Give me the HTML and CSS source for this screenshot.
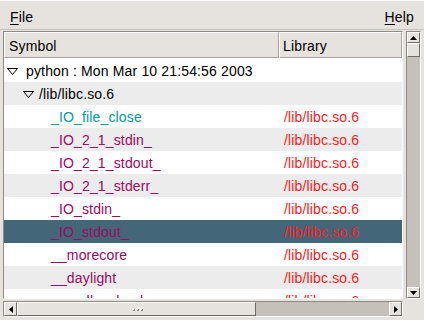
FILE: index.html
```html
<!DOCTYPE html>
<html lang="en">
    <head>
        <meta charset="utf-8">
        <title>Symbols</title>
        <link rel="stylesheet" href="styles.css">
    </head>
    <body>
        <div class="menubar">
            <span class="menuItem"><u>F</u>ile</span>
            <span class="menuItem"><u>H</u>elp</span>
        </div>
        <div class="mainContainer">
            <div class="treeFrame">
                <div class="headerRow">
                    <div class="headerCell symbolCol">Symbol</div>
                    <div class="headerCell libCol">Library</div>
                </div>
                <div class="row">
                    <div class="cell symbolCol depth0"><svg class="expander" width="11" height="7" viewBox="0 0 11 7"><polygon points="0.5,0.5 10.5,0.5 5.5,6.5" fill="none" stroke="#000" stroke-width="1"/></svg>python : Mon Mar 10 21:54:56 2003</div>
                    <div class="cell libCol"></div>
                </div>
                <div class="row alt">
                    <div class="cell symbolCol depth1"><svg class="expander" width="11" height="7" viewBox="0 0 11 7"><polygon points="0.5,0.5 10.5,0.5 5.5,6.5" fill="none" stroke="#000" stroke-width="1"/></svg>/lib/libc.so.6</div>
                    <div class="cell libCol"></div>
                </div>
                <div class="row">
                    <div class="cell symbolCol depth2 funcName">_IO_file_close</div>
                    <div class="cell libCol libName">/lib/libc.so.6</div>
                </div>
                <div class="row alt">
                    <div class="cell symbolCol depth2 dataName">_IO_2_1_stdin_</div>
                    <div class="cell libCol libName">/lib/libc.so.6</div>
                </div>
                <div class="row">
                    <div class="cell symbolCol depth2 dataName">_IO_2_1_stdout_</div>
                    <div class="cell libCol libName">/lib/libc.so.6</div>
                </div>
                <div class="row alt">
                    <div class="cell symbolCol depth2 dataName">_IO_2_1_stderr_</div>
                    <div class="cell libCol libName">/lib/libc.so.6</div>
                </div>
                <div class="row">
                    <div class="cell symbolCol depth2 dataName">_IO_stdin_</div>
                    <div class="cell libCol libName">/lib/libc.so.6</div>
                </div>
                <div class="row selected">
                    <div class="cell symbolCol depth2 dataName">_IO_stdout_</div>
                    <div class="cell libCol libName">/lib/libc.so.6</div>
                </div>
                <div class="row">
                    <div class="cell symbolCol depth2 dataName">__morecore</div>
                    <div class="cell libCol libName">/lib/libc.so.6</div>
                </div>
                <div class="row alt">
                    <div class="cell symbolCol depth2 dataName">__daylight</div>
                    <div class="cell libCol libName">/lib/libc.so.6</div>
                </div>
                <div class="row">
                    <div class="cell symbolCol depth2 dataName">__malloc_hook</div>
                    <div class="cell libCol libName">/lib/libc.so.6</div>
                </div>
            </div>
            <div class="vScroll">
                <div class="scrollButton vButton"><svg width="7" height="4" viewBox="0 0 7 4"><polygon points="3.5,0 7,4 0,4" fill="#000"/></svg></div>
                <div class="vThumb"></div>
                <div class="vTrough"></div>
                <div class="scrollButton vButton"><svg width="7" height="4" viewBox="0 0 7 4"><polygon points="0,0 7,0 3.5,4" fill="#000"/></svg></div>
            </div>
        </div>
        <div class="hScroll">
            <div class="scrollButton hButton"><svg width="4" height="7" viewBox="0 0 4 7"><polygon points="0,3.5 4,0 4,7" fill="#000"/></svg></div>
            <div class="hThumb"><span class="grip"></span><span class="grip"></span><span class="grip"></span></div>
            <div class="hTrough"></div>
            <div class="scrollButton hButton"><svg width="4" height="7" viewBox="0 0 4 7"><polygon points="0,0 4,3.5 0,7" fill="#000"/></svg></div>
        </div>
    </body>
</html>
```

FILE: styles.css
```css
* {
    margin: 0;
    padding: 0;
    box-sizing: border-box;
}
html, body {
    width: 424px;
    height: 320px;
    overflow: hidden;
    background-color: #e6e3de;
    font-family: "Liberation Sans", Arial, sans-serif;
    font-size: 14px;
    letter-spacing: 0.15px;
    color: #000;
}
.menubar {
    height: 30px;
    display: flex;
    justify-content: space-between;
    align-items: center;
    padding: 3px 10px 0 10px;
    border-top: 1px solid #fff;
    border-bottom: 1px solid #c8c4bd;
}
.menuItem u {
    text-decoration: underline;
    text-underline-offset: 2px;
}
.mainContainer {
    display: flex;
    margin-top: 1px;
    padding-left: 3px;
    height: 268px;
}
.treeFrame {
    width: 400px;
    height: 268px;
    border-style: solid;
    border-width: 1px;
    border-color: #8d8983 #fff #fff #8d8983;
    background-color: #fff;
    overflow: hidden;
}
.headerRow {
    display: flex;
    height: 27px;
    background-color: #e6e3de;
    border-bottom: 1px solid #fff;
}
.headerCell {
    height: 26px;
    line-height: 26px;
    padding-left: 4px;
    border-top: 1px solid #fff;
    border-left: 1px solid #fff;
    border-right: 1px solid #a9a59e;
    border-bottom: 1px solid #a9a59e;
}
.symbolCol {
    width: 275px;
    flex-shrink: 0;
}
.libCol {
    flex: 1;
}
.headerCell.libCol {
    padding-left: 3px;
}
.row {
    display: flex;
    height: 23px;
    line-height: 24px;
    background-color: #fff;
}
.row.alt {
    background-color: #ececec;
}
.row.selected {
    background-color: #436679;
}
.cell {
    white-space: nowrap;
    overflow: hidden;
}
.cell.libCol {
    padding-left: 5px;
}
.depth0 {
    padding-left: 2px;
}
.depth1 {
    padding-left: 18px;
}
.depth2 {
    padding-left: 47px;
}
.expander {
    vertical-align: middle;
    margin: 0 8px 2px 1px;
}
.depth1 .expander {
    margin-right: 5px;
}
.funcName {
    color: #009c9c;
}
.dataName {
    color: #9c0a62;
}
.libName {
    color: #ff1a1a;
}
.vScroll {
    width: 15px;
    height: 268px;
    margin-left: 3px;
    display: flex;
    flex-direction: column;
    background-color: #c5c1ba;
    border: 1px solid;
    border-color: #8d8983 #fff #fff #8d8983;
}
.scrollButton {
    display: flex;
    align-items: center;
    justify-content: center;
    background-color: #e6e3de;
    border-style: solid;
    border-width: 1px;
    border-color: #fff #6f6b66 #6f6b66 #fff;
}
.vButton {
    height: 11px;
}
.vThumb {
    height: 14px;
    background-color: #e6e3de;
    border-style: solid;
    border-width: 1px;
    border-color: #fff #6f6b66 #6f6b66 #fff;
}
.vTrough {
    flex: 1;
}
.hScroll {
    display: flex;
    width: 400px;
    height: 16px;
    margin: 2px 0 0 3px;
    background-color: #c5c1ba;
    border: 1px solid;
    border-color: #8d8983 #fff #fff #8d8983;
}
.hButton {
    width: 13px;
}
.hThumb {
    width: 239px;
    display: flex;
    align-items: center;
    justify-content: center;
    gap: 2px;
    background-color: #e6e3de;
    border-style: solid;
    border-width: 1px;
    border-color: #fff #6f6b66 #6f6b66 #fff;
}
.grip {
    width: 2px;
    height: 2px;
    background-color: #fff;
    box-shadow: 1px 1px 0 #8d8983;
}
.hTrough {
    flex: 1;
}
```
